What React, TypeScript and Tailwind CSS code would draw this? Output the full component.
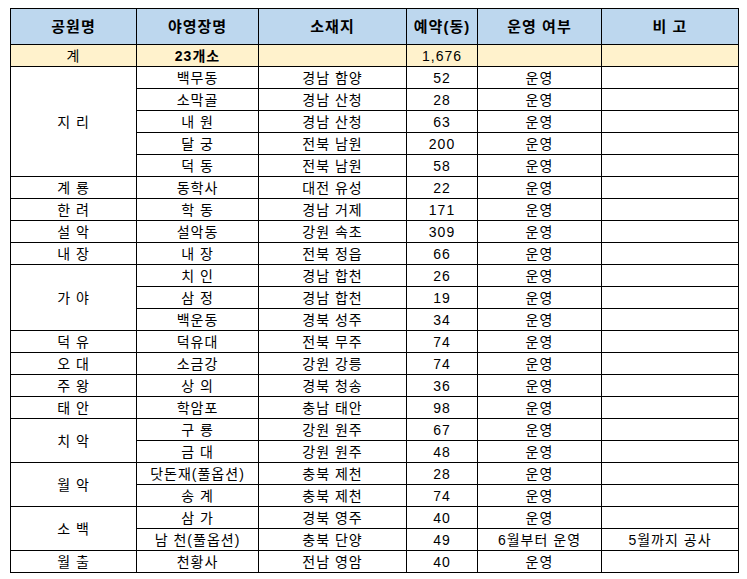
import React from 'react'

type Row = { camp: string; loc: string; count: string; status?: string; note?: string }
type Park = { name: string; rows: Row[] }

const parks: Park[] = [
  {
    name: '지 리',
    rows: [
      { camp: '백무동', loc: '경남 함양', count: '52' },
      { camp: '소막골', loc: '경남 산청', count: '28' },
      { camp: '내 원', loc: '경남 산청', count: '63' },
      { camp: '달 궁', loc: '전북 남원', count: '200' },
      { camp: '덕 동', loc: '전북 남원', count: '58' },
    ],
  },
  { name: '계 룡', rows: [{ camp: '동학사', loc: '대전 유성', count: '22' }] },
  { name: '한 려', rows: [{ camp: '학 동', loc: '경남 거제', count: '171' }] },
  { name: '설 악', rows: [{ camp: '설악동', loc: '강원 속초', count: '309' }] },
  { name: '내 장', rows: [{ camp: '내 장', loc: '전북 정읍', count: '66' }] },
  {
    name: '가 야',
    rows: [
      { camp: '치 인', loc: '경남 합천', count: '26' },
      { camp: '삼 정', loc: '경남 합천', count: '19' },
      { camp: '백운동', loc: '경북 성주', count: '34' },
    ],
  },
  { name: '덕 유', rows: [{ camp: '덕유대', loc: '전북 무주', count: '74' }] },
  { name: '오 대', rows: [{ camp: '소금강', loc: '강원 강릉', count: '74' }] },
  { name: '주 왕', rows: [{ camp: '상 의', loc: '경북 청송', count: '36' }] },
  { name: '태 안', rows: [{ camp: '학암포', loc: '충남 태안', count: '98' }] },
  {
    name: '치 악',
    rows: [
      { camp: '구 룡', loc: '강원 원주', count: '67' },
      { camp: '금 대', loc: '강원 원주', count: '48' },
    ],
  },
  {
    name: '월 악',
    rows: [
      { camp: '닷돈재(풀옵션)', loc: '충북 제천', count: '28' },
      { camp: '송 계', loc: '충북 제천', count: '74' },
    ],
  },
  {
    name: '소 백',
    rows: [
      { camp: '삼 가', loc: '경북 영주', count: '40' },
      { camp: '남 천(풀옵션)', loc: '충북 단양', count: '49', status: '6월부터 운영', note: '5월까지 공사' },
    ],
  },
  { name: '월 출', rows: [{ camp: '천황사', loc: '전남 영암', count: '40' }] },
]

const cell = 'border border-black text-center align-middle p-0 whitespace-nowrap leading-[20px]'

export default function App() {
  return (
    <div className="bg-white min-h-[579px] pt-[8px] pl-[10px] font-['Liberation_Sans','Noto_Sans_CJK_KR',sans-serif] text-[14px] tracking-[1px] text-black">
      <table className="border-collapse border border-black table-fixed w-[728px]">
        <colgroup>
          <col className="w-[126px]" />
          <col className="w-[122px]" />
          <col className="w-[148px]" />
          <col className="w-[71px]" />
          <col className="w-[124px]" />
          <col className="w-[137px]" />
        </colgroup>
        <thead>
          <tr className="h-[36px] bg-[#bdd7ee] font-bold text-[15px] tracking-[1px]">
            <th className={cell}>공원명</th>
            <th className={cell}>야영장명</th>
            <th className={cell}>소재지</th>
            <th className={cell}>예약(동)</th>
            <th className={cell}>운영 여부</th>
            <th className={cell}>비 고</th>
          </tr>
        </thead>
        <tbody>
          <tr className="h-[22px] bg-[#fff2cc]">
            <td className={cell}>계</td>
            <td className={`${cell} font-bold`}>23개소</td>
            <td className={cell}></td>
            <td className={cell}>1,676</td>
            <td className={cell}></td>
            <td className={cell}></td>
          </tr>
          {parks.map((p) =>
            p.rows.map((r, i) => (
              <tr key={p.name + r.camp} className="h-[22px]">
                {i === 0 && (
                  <td className={cell} rowSpan={p.rows.length}>
                    {p.name}
                  </td>
                )}
                <td className={cell}>{r.camp}</td>
                <td className={cell}>{r.loc}</td>
                <td className={cell}>{r.count}</td>
                <td className={cell}>{r.status ?? '운영'}</td>
                <td className={cell}>{r.note ?? ''}</td>
              </tr>
            ))
          )}
        </tbody>
      </table>
    </div>
  )
}
